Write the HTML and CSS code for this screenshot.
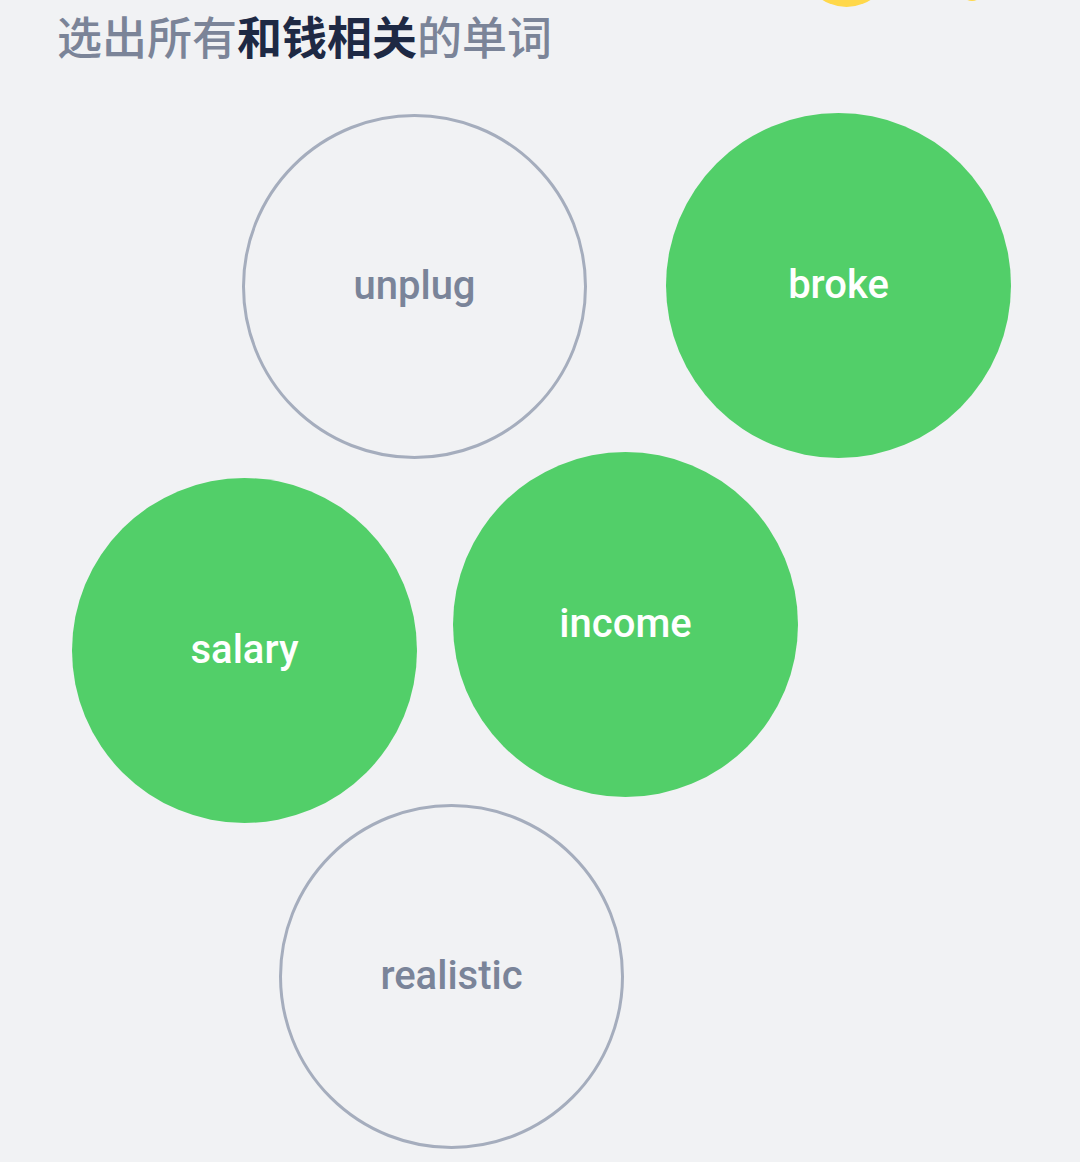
FILE: index.html
```html
<!DOCTYPE html>
<html lang="zh">
<head>
<meta charset="utf-8">
<link rel="stylesheet" href="styles.css">
</head>
<body>
<div class="page">
  <span class="deco deco-big"></span>
  <span class="deco deco-small"></span>
  <h1 class="title">选出所有<strong>和钱相关</strong>的单词</h1>
  <div class="board">
    <div class="bubble outline b-unplug">unplug</div>
    <div class="bubble filled b-broke">broke</div>
    <div class="bubble filled b-salary">salary</div>
    <div class="bubble filled b-income">income</div>
    <div class="bubble outline b-realistic">realistic</div>
  </div>
</div>
</body>
</html>
```
FILE: styles.css
```css
html, body {
  margin: 0;
  padding: 0;
  background: #f1f2f4;
}
.page {
  position: relative;
  width: 1080px;
  height: 1162px;
  overflow: hidden;
  font-family: Roboto, "Noto Sans CJK SC", sans-serif;
}
.deco {
  position: absolute;
  border-radius: 50%;
  background: #ffd84a;
}
.deco-big {
  left: 802px;
  top: -82px;
  width: 89px;
  height: 89px;
}
.deco-small {
  left: 961px;
  top: -21px;
  width: 22px;
  height: 22px;
}
.title {
  margin: 0;
  padding: 8px 0 0 57px;
  height: 60px;
  font-family: "Noto Sans CJK SC", sans-serif;
  font-size: 45px;
  line-height: 56px;
  font-weight: 500;
  color: #7b8498;
  letter-spacing: 0;
}
.title strong {
  font-weight: 700;
  color: #1e2944;
}
.board {
  position: relative;
  height: 1090px;
}
.bubble {
  position: absolute;
  width: 345px;
  height: 345px;
  box-sizing: border-box;
  border-radius: 50%;
  display: flex;
  align-items: center;
  justify-content: center;
  font-family: Roboto, sans-serif;
  font-weight: 500;
  font-size: 40px;
  padding-bottom: 2px;
}
.outline {
  border: 3px solid #a5adbd;
  color: #7a8499;
}
.filled {
  background: #52cf69;
  color: #ffffff;
}
.b-unplug { left: 242px; top: 46px; }
.b-broke { left: 666px; top: 45px; }
.b-salary { left: 72px; top: 410px; }
.b-income { left: 453px; top: 384px; }
.b-realistic { left: 279px; top: 736px; }
```
